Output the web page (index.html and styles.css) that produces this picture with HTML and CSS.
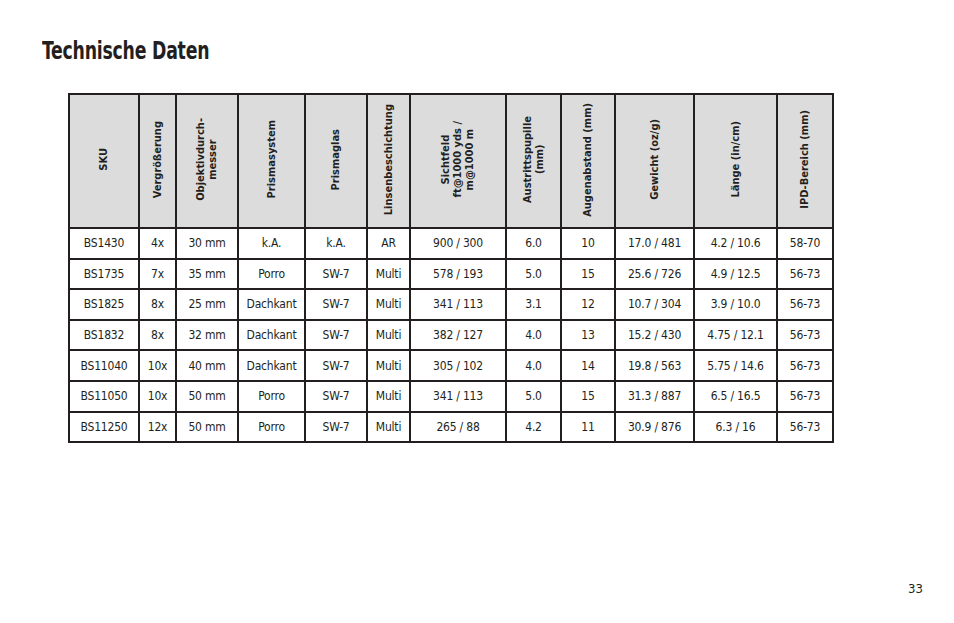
FILE: index.html
```html
<!DOCTYPE html>
<html lang="de">
<head>
<meta charset="utf-8">
<title>Technische Daten</title>
<link rel="stylesheet" href="styles.css">
</head>
<body>
<div class="page">
  <h1 class="title">Technische Daten</h1>
  <table class="spec">
    <colgroup>
      <col class="c1"><col class="c2"><col class="c3"><col class="c4"><col class="c5"><col class="c6">
      <col class="c7"><col class="c8"><col class="c9"><col class="c10"><col class="c11"><col class="c12">
    </colgroup>
    <thead>
      <tr>
        <th><span class="vt">SKU</span></th>
        <th><span class="vt">Vergrößerung</span></th>
        <th><span class="vt">Objektivdurch-<br>messer</span></th>
        <th><span class="vt">Prismasystem</span></th>
        <th><span class="vt">Prismaglas</span></th>
        <th><span class="vt">Linsenbeschichtung</span></th>
        <th><span class="vt">Sichtfeld<br>ft@1000 yds /<br>m@1000 m</span></th>
        <th><span class="vt">Austrittspupille<br>(mm)</span></th>
        <th><span class="vt">Augenabstand (mm)</span></th>
        <th><span class="vt">Gewicht (oz/g)</span></th>
        <th><span class="vt">Länge (in/cm)</span></th>
        <th><span class="vt">IPD-Bereich (mm)</span></th>
      </tr>
    </thead>
    <tbody>
      <tr><td>BS1430</td><td>4x</td><td>30 mm</td><td>k.A.</td><td>k.A.</td><td>AR</td><td>900 / 300</td><td>6.0</td><td>10</td><td>17.0 / 481</td><td>4.2 / 10.6</td><td>58-70</td></tr>
      <tr><td>BS1735</td><td>7x</td><td>35 mm</td><td>Porro</td><td>SW-7</td><td>Multi</td><td>578 / 193</td><td>5.0</td><td>15</td><td>25.6 / 726</td><td>4.9 / 12.5</td><td>56-73</td></tr>
      <tr><td>BS1825</td><td>8x</td><td>25 mm</td><td>Dachkant</td><td>SW-7</td><td>Multi</td><td>341 / 113</td><td>3.1</td><td>12</td><td>10.7 / 304</td><td>3.9 / 10.0</td><td>56-73</td></tr>
      <tr><td>BS1832</td><td>8x</td><td>32 mm</td><td>Dachkant</td><td>SW-7</td><td>Multi</td><td>382 / 127</td><td>4.0</td><td>13</td><td>15.2 / 430</td><td>4.75 / 12.1</td><td>56-73</td></tr>
      <tr><td>BS11040</td><td>10x</td><td>40 mm</td><td>Dachkant</td><td>SW-7</td><td>Multi</td><td>305 / 102</td><td>4.0</td><td>14</td><td>19.8 / 563</td><td>5.75 / 14.6</td><td>56-73</td></tr>
      <tr><td>BS11050</td><td>10x</td><td>50 mm</td><td>Porro</td><td>SW-7</td><td>Multi</td><td>341 / 113</td><td>5.0</td><td>15</td><td>31.3 / 887</td><td>6.5 / 16.5</td><td>56-73</td></tr>
      <tr><td>BS11250</td><td>12x</td><td>50 mm</td><td>Porro</td><td>SW-7</td><td>Multi</td><td>265 / 88</td><td>4.2</td><td>11</td><td>30.9 / 876</td><td>6.3 / 16</td><td>56-73</td></tr>
    </tbody>
  </table>
  <div class="pagenum">33</div>
</div>
</body>
</html>
```
FILE: styles.css
```css
html, body {
  margin: 0;
  padding: 0;
  background: #ffffff;
}
body {
  font-family: "Liberation Sans Narrow", "DejaVu Sans Condensed", "Liberation Sans", sans-serif;
  color: #231f20;
}
.page {
  position: relative;
  width: 954px;
  height: 623px;
  padding: 36px 0 0 42px;
  box-sizing: border-box;
}
.title {
  margin: 0;
  font-size: 25px;
  font-weight: bold;
  line-height: 30px;
  letter-spacing: -0.3px;
  transform: scaleX(0.77);
  transform-origin: left center;
  white-space: nowrap;
}
.spec {
  margin: 27px 0 0 26px;
  border-collapse: collapse;
  table-layout: fixed;
  width: 766px;
  border: 2px solid #231f20;
}
.c1 { width: 70px; }
.c2 { width: 37px; }
.c3 { width: 62px; }
.c4 { width: 67px; }
.c5 { width: 62px; }
.c6 { width: 43px; }
.c7 { width: 96px; }
.c8 { width: 55px; }
.c9 { width: 54px; }
.c10 { width: 79px; }
.c11 { width: 83px; }
.c12 { width: 56px; }
.spec th, .spec td {
  border: 2px solid #231f20;
  padding: 0;
  text-align: center;
  vertical-align: middle;
}
.spec th {
  background: #dcdcdc;
  height: 132px;
  font-size: 11px;
  font-weight: bold;
  line-height: 12px;
}
.vt {
  display: inline-block;
  writing-mode: vertical-rl;
  transform: rotate(180deg);
  white-space: nowrap;
  text-align: center;
}
.spec td {
  height: 28.6px;
  font-size: 12px;
  letter-spacing: -0.2px;
  white-space: nowrap;
}
.pagenum {
  position: absolute;
  left: 908px;
  top: 581px;
  font-size: 13px;
}
```
